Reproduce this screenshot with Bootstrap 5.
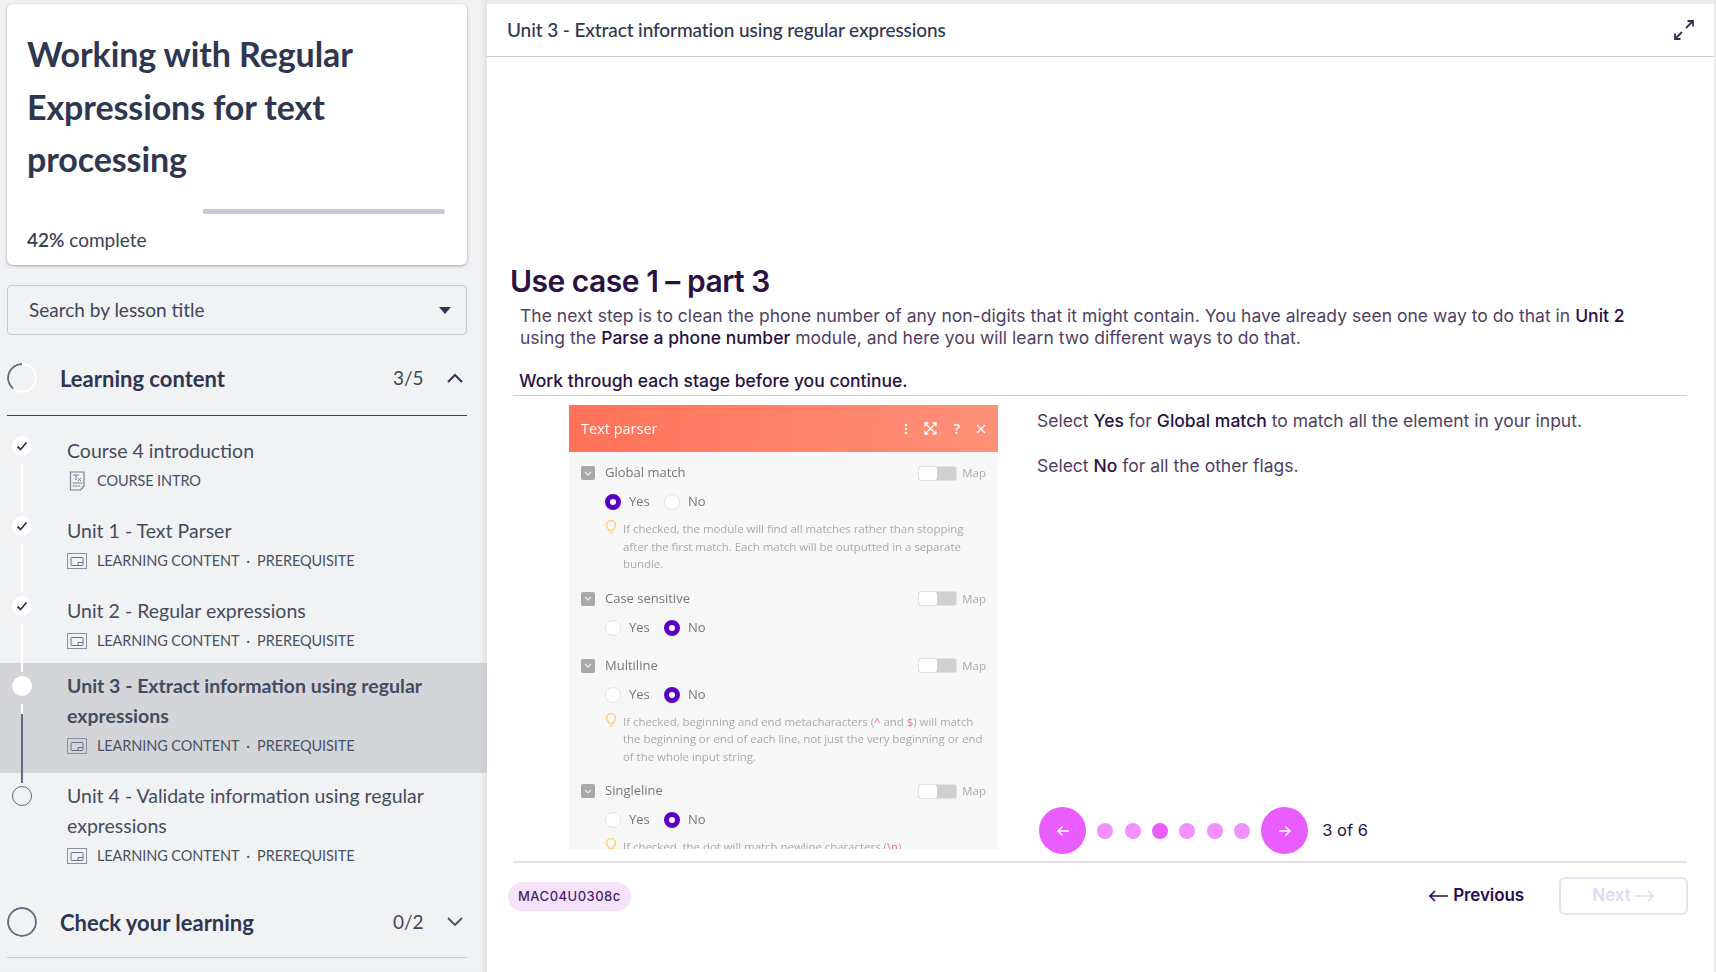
<!DOCTYPE html>
<html lang="en">
<head>
<meta charset="UTF-8" />
<title>Unit 3 - Extract information using regular expressions</title>
<link href="https://cdn.jsdelivr.net/npm/bootstrap@5.3.0/dist/css/bootstrap.min.css" rel="stylesheet" />
<style>
  html, body { height: 100%; margin: 0; overflow: hidden; background: #e9eaec; }
  .page { height: 972px; width: 1716px; }
  .side { width: 487px; flex: none; height: 972px; background: #f1f2f4; padding-top: 4px; font-family: "Lato", sans-serif; color: #3a4256; box-shadow: inset -7px 0 6px -5px #dcdde0; overflow: hidden; }
  .course-box { margin: 0 20px 0 7px; height: 261px; background: #fff; border-radius: 6px; box-shadow: 0 1px 3px rgba(40,45,70,.4); padding: 24px 20px 0 20px; }
  .course-box h1 { font-family: "Lato", sans-serif; font-size: 34px; line-height: 52.5px; font-weight: 700; color: #2f3650; margin: 0; letter-spacing: -.1px; }
  .prog { height: 5px; margin: 23px 0 0 0; display: flex; width: 418px; }
  .prog-done { width: 42%; }
  .prog-left { flex: 1; background: #c8cad6; border-radius: 0 3px 3px 0; }
  .pct { font-size: 19px; margin-top: 12px; }
  .search-box { margin: 20px 20px 0 7px; height: 50px; border: 1px solid #c8cad6; border-radius: 4px; padding: 0 15px 0 21px; font-size: 19px; color: #3f4659; }
  .caret-down { width: 0; height: 0; border-left: 6px solid transparent; border-right: 6px solid transparent; border-top: 7px solid #2f3650; }
  .sec-head { margin: 0 20px 0 7px; height: 80px; font-size: 22px; font-weight: 700; color: #2f3650; }
  .sec-head .num { font-size: 19px; font-weight: 400; color: #3f4659; width: 54px; }
  .sec-one { margin-top: 6px; border-bottom: 1px solid #3a4256; height: 75px; }
  .sec-two { margin-top: 14px; height: 71px; border-bottom: 1px solid #c8cad6; }
  .sec-name { margin-left: 23px; }
  .ring { width: 30px; height: 30px; flex: none; border-radius: 50%; }
  .lesson { position: relative; padding: 0 20px 0 67px; font-size: 19.5px; line-height: 30px; color: #454c60; }
  .lesson-sub { font-size: 14.5px; line-height: 22px; color: #4a5164; display: flex; align-items: center; gap: 10px; margin-top: 4px; letter-spacing: -.1px; }
  .lesson-one { height: 80px; padding-top: 17px; }
  .lesson-first { margin-top: 20px; height: 80px; padding-top: 0; }
  .lesson-now { height: 110px; background: #d4d5d9; padding-top: 8px; font-weight: 700; box-shadow: inset -7px 0 6px -5px #c4c5c9; }
  .lesson-next { height: 100px; padding-top: 8px; }
  .dot-mark { position: absolute; left: 12px; width: 20px; height: 20px; border-radius: 50%; background: #fff; display: flex; align-items: center; justify-content: center; }
  .rail { position: absolute; left: 21px; width: 2px; background: #fff; }

  .content { flex: 1; margin-top: 4px; margin-right: 4px; background: #fff; font-family: "Inter", sans-serif; height: 968px; }
  .top-bar { height: 53px; border-bottom: 1px solid #cdced6; padding: 0 20px 0 20px; font-family: "Lato", sans-serif; font-size: 19px; color: #2f3650; font-weight: 500; }
  .top-bar span { letter-spacing: -.1px; }
  .body-wrap { padding: 0 26px 0 21px; }
  .body-wrap h2 { font-family: "Inter", sans-serif; font-size: 30px; font-weight: 600; color: #2a1145; margin: 204px 0 0 2px; line-height: 40px; letter-spacing: -.5px; }
  .intro { margin: 4px 0 0 12px; font-size: 17.5px; line-height: 22px; color: #503f63; width: 1120px; letter-spacing: .02px; }
  .intro b, .right-note b { font-weight: 500; color: #2a1145; }
  .instruct { margin: 20px 0 0 11px; font-size: 17.5px; line-height: 24px; font-weight: 500; color: #2a1145; }
  .stage { margin: 2px 0 0 5px; border-top: 1px solid #cfcdd2; border-bottom: 2px solid #e3dfe3; height: 468px; width: 1174px; display: flex; }
  .shot { width: 429px; height: 444px; margin: 9px 0 0 56px; flex: none; background: #f7f7f7; font-family: "Open Sans", sans-serif; overflow: hidden; filter: blur(.35px); }
  .shot-bar { height: 47px; background: linear-gradient(100deg, #ff7259, #ff9078); color: #fff; font-size: 14.5px; padding: 0 12px; }
  .shot-bar svg { display: block; }
  .fld { padding: 0 12px 0 12px; color: #777; font-size: 13px; }
  .fld-head { height: 20px; }
  .box-ico { width: 14px; height: 14px; background: #a9a9a9; border-radius: 2px; margin-right: 10px; display: flex; align-items: center; justify-content: center; }
  .map-tog { width: 39px; height: 15px; background: #d0d0d0; border-radius: 3px; border: 1px solid #e2e2e2; margin-right: 5px; }
  .map-tog i { display: block; width: 18px; height: 13px; background: #fff; border-radius: 3px; }
  .map-txt { color: #aaa; font-size: 11.5px; }
  .opts { margin-left: 24px; height: 20px; margin-top: 9px; gap: 8px; }
  .opt { width: 16px; height: 16px; border-radius: 50%; background: #fff; border: 1px solid #e4e4e4; }
  .opt-on { background: #fff; border: 5px solid #5b00c2; }
  .opts span { width: 27px; }
  .hint { display: flex; margin-top: 8px; gap: 6px; margin-left: 24px; font-size: 11.5px; line-height: 17.5px; color: #aaa; letter-spacing: -.05px; }
  .hint svg { flex: none; margin-top: 0; }
  .hint em { font-style: normal; color: #f06aa8; }
  .right-pane { flex: 1; position: relative; margin-left: 39px; padding-top: 13px; }
  .right-note { font-size: 17.5px; line-height: 23px; color: #503f63; }
  .right-note p { margin: 0 0 22px; }
  .stepper { position: absolute; left: 2px; top: 411px; height: 47px; gap: 11px; }
  .step-btn { width: 47px; height: 47px; border-radius: 50%; background: #e95dff; display: flex; align-items: center; justify-content: center; }
  .step-dot { width: 16px; height: 16px; border-radius: 50%; background: #f190ff; margin: 0 .2px; }
  .step-now { background: #e95dff; }
  .step-count { font-size: 16.5px; color: #2a1145; margin-left: 3px; }
  .foot-row { padding: 14px 0 0 0; width: 1180px; }
  .code-pill { background: #f6e3fb; color: #4a1c6e; font-size: 13px; letter-spacing: .5px; border-radius: 15px; height: 29px; line-height: 29px; padding: 0 10px; font-weight: 500; }
  .prev-link { font-size: 17px; font-weight: 600; color: #2a0a55; gap: 5px; letter-spacing: -.1px; }
  .next-btn { width: 129px; height: 38px; border: 2px solid #e6e0f0; border-radius: 6px; color: #e2daee; font-size: 17px; font-weight: 600; gap: 4px; margin-left: 35px; }
</style>
</head>
<body>
<div class="page d-flex">
  <aside class="side">
    <div class="course-box">
      <h1>Working with Regular Expressions for text processing</h1>
      <div class="prog"><div class="prog-done"></div><div class="prog-left"></div></div>
      <div class="pct"><span class="fw-semibold">42%</span> complete</div>
    </div>
    <div class="search-box d-flex align-items-center justify-content-between">
      <span>Search by lesson title</span><span class="caret-down"></span>
    </div>

    <div class="sec-head sec-one d-flex align-items-center">
      <svg class="ring" viewBox="0 0 30 30"><circle cx="15" cy="15" r="14" fill="none" stroke="#fff" stroke-width="2"/><path d="M15 1A14 14 0 0 0 6 25.7" fill="none" stroke="#646a7e" stroke-width="2"/></svg>
      <span class="sec-name flex-grow-1">Learning content</span>
      <span class="num">3/5</span>
      <svg width="16" height="10" viewBox="0 0 16 10" class="me-1"><path d="M1 9l7-7 7 7" fill="none" stroke="#2f3650" stroke-width="2"/></svg>
    </div>

    <div class="lesson lesson-first">
      <span class="dot-mark" style="top:0"><svg width="12" height="10" viewBox="0 0 12 10"><path d="M1.5 5.5l3 3 6-7" fill="none" stroke="#2f3650" stroke-width="1.8"/></svg></span>
      <span class="rail" style="top:27px;height:49px"></span>
      <div>Course 4 introduction</div>
      <div class="lesson-sub">
        <svg width="20" height="20" viewBox="0 0 20 20"><path d="M3.5 1h13.5v14l-3.500 4H3.500z" fill="none" stroke="#7b8092" stroke-width="1.200"/><path d="M6 4h6M9 4v5M11 7l3 3M14 7l-3 3M5.500 12h10M5.500 15h8" fill="none" stroke="#7b8092"/></svg>
        <span>COURSE INTRO</span>
      </div>
    </div>
    <div class="lesson lesson-one">
      <span class="dot-mark" style="top:0"><svg width="12" height="10" viewBox="0 0 12 10"><path d="M1.500 5.500l3 3 6-7" fill="none" stroke="#2f3650" stroke-width="1.800"/></svg></span>
      <span class="rail" style="top:27px;height:49px"></span>
      <div style="margin-top:-17px">Unit 1 - Text Parser</div>
      <div class="lesson-sub">
        <svg width="20" height="16" viewBox="0 0 20 16"><rect x=".5" y=".5" width="19" height="15" fill="none" stroke="#8b8fa0"/><rect x="4" y="4.500" width="12" height="8" rx="1" fill="none" stroke="#6b7084"/><path d="M11 12.500v-3h5" fill="none" stroke="#6b7084"/></svg>
        <span>LEARNING CONTENT &nbsp;·&nbsp; PREREQUISITE</span>
      </div>
    </div>
    <div class="lesson lesson-one" style="height:67px">
      <span class="dot-mark" style="top:0"><svg width="12" height="10" viewBox="0 0 12 10"><path d="M1.500 5.500l3 3 6-7" fill="none" stroke="#2f3650" stroke-width="1.800"/></svg></span>
      <span class="rail" style="top:27px;height:49px;z-index:2"></span>
      <div style="margin-top:-17px">Unit 2 - Regular expressions</div>
      <div class="lesson-sub">
        <svg width="20" height="16" viewBox="0 0 20 16"><rect x=".5" y=".5" width="19" height="15" fill="none" stroke="#8b8fa0"/><rect x="4" y="4.500" width="12" height="8" rx="1" fill="none" stroke="#6b7084"/><path d="M11 12.500v-3h5" fill="none" stroke="#6b7084"/></svg>
        <span>LEARNING CONTENT &nbsp;·&nbsp; PREREQUISITE</span>
      </div>
    </div>
    <div class="lesson lesson-now">
      <span class="dot-mark" style="top:13px"></span>
      <span class="rail" style="top:41px;height:10px;z-index:2"></span>
      <span class="rail" style="top:51px;height:69px;background:#646a7e;z-index:2"></span>
      <div>Unit 3 - Extract information using regular expressions</div>
      <div class="lesson-sub fw-normal">
        <svg width="20" height="16" viewBox="0 0 20 16"><rect x=".5" y=".5" width="19" height="15" fill="none" stroke="#8b8fa0"/><rect x="4" y="4.500" width="12" height="8" rx="1" fill="none" stroke="#6b7084"/><path d="M11 12.500v-3h5" fill="none" stroke="#6b7084"/></svg>
        <span>LEARNING CONTENT &nbsp;·&nbsp; PREREQUISITE</span>
      </div>
    </div>
    <div class="lesson lesson-next">
      <span class="dot-mark" style="top:13px;background:none;border:1px solid #646a7e"></span>
      <div>Unit 4 - Validate information using regular expressions</div>
      <div class="lesson-sub">
        <svg width="20" height="16" viewBox="0 0 20 16"><rect x=".5" y=".5" width="19" height="15" fill="none" stroke="#8b8fa0"/><rect x="4" y="4.500" width="12" height="8" rx="1" fill="none" stroke="#6b7084"/><path d="M11 12.500v-3h5" fill="none" stroke="#6b7084"/></svg>
        <span>LEARNING CONTENT &nbsp;·&nbsp; PREREQUISITE</span>
      </div>
    </div>

    <div class="sec-head sec-two d-flex align-items-center">
      <svg class="ring" viewBox="0 0 30 30"><circle cx="15" cy="15" r="14" fill="none" stroke="#646a7e" stroke-width="2"/></svg>
      <span class="sec-name flex-grow-1">Check your learning</span>
      <span class="num">0/2</span>
      <svg width="16" height="10" viewBox="0 0 16 10" class="me-1"><path d="M1 1l7 7 7-7" fill="none" stroke="#4a5164" stroke-width="1.800"/></svg>
    </div>
  </aside>

  <main class="content">
    <div class="top-bar d-flex align-items-center justify-content-between">
      <span>Unit 3 - Extract information using regular expressions</span>
      <svg width="20" height="20" viewBox="0 0 20 20"><path d="M12 8l7-7M13.500 1H19v5.500M8 12l-7 7M1 13.500V19h5.500" fill="none" stroke="#2f3650" stroke-width="1.800"/></svg>
    </div>
    <div class="body-wrap">
      <h2>Use case 1 – part 3</h2>
      <p class="intro">The next step is to clean the phone number of any non-digits that it might contain. You have already seen one way to do that in <b>Unit 2</b> using the <b>Parse a phone number</b> module, and here you will learn two different ways to do that.</p>
      <div class="instruct">Work through each stage before you continue.</div>
      <div class="stage">
        <div class="shot">
          <div class="shot-bar d-flex align-items-center justify-content-between">
            <span>Text parser</span>
            <span class="d-flex align-items-center gap-3">
              <svg width="4" height="12" viewBox="0 0 4 12"><circle cx="2" cy="2" r="1.300" fill="#fff"/><circle cx="2" cy="6" r="1.300" fill="#fff"/><circle cx="2" cy="10" r="1.300" fill="#fff"/></svg>
              <svg width="13" height="13" viewBox="0 0 13 13"><path d="M1 4.500V1h3.500M8.500 1H12v3.500M1 8.500V12h3.500M8.500 12H12V8.500M1 1l11 11M12 1L1 12" fill="none" stroke="#fff" stroke-width="1.300"/></svg>
              <span class="fw-semibold">?</span>
              <svg width="10" height="10" viewBox="0 0 10 10"><path d="M1 1l8 8M9 1L1 9" stroke="#fff" stroke-width="1.300"/></svg>
            </span>
          </div>
          <div class="fld" style="margin-top:11px">
            <div class="fld-head d-flex align-items-center">
              <span class="box-ico"><svg width="8" height="5" viewBox="0 0 8 5"><path d="M1 1l3 3 3-3" fill="none" stroke="#eee" stroke-width="1.200"/></svg></span>
              <span class="flex-grow-1">Global match</span><span class="map-tog"><i></i></span><span class="map-txt">Map</span>
            </div>
            <div class="opts d-flex align-items-center"><i class="opt opt-on"></i><span>Yes</span><i class="opt"></i><span>No</span></div>
            <div class="hint">
              <svg width="12" height="15" viewBox="0 0 12 15"><path d="M4 10.500C3 8 1.500 7.500 1.500 5a4.500 4.500 0 0 1 9 0c0 2.500-1.500 3-2.500 5.500zM4.500 13h3" fill="none" stroke="#ffd27a" stroke-width="1.400"/></svg>
              <span>If checked, the module will find all matches rather than stopping after the first match. Each match will be outputted in a separate bundle.</span>
            </div>
          </div>
          <div class="fld" style="margin-top:16px">
            <div class="fld-head d-flex align-items-center">
              <span class="box-ico"><svg width="8" height="5" viewBox="0 0 8 5"><path d="M1 1l3 3 3-3" fill="none" stroke="#eee" stroke-width="1.200"/></svg></span>
              <span class="flex-grow-1">Case sensitive</span><span class="map-tog"><i></i></span><span class="map-txt">Map</span>
            </div>
            <div class="opts d-flex align-items-center"><i class="opt"></i><span>Yes</span><i class="opt opt-on"></i><span>No</span></div>
          </div>
          <div class="fld" style="margin-top:18px">
            <div class="fld-head d-flex align-items-center">
              <span class="box-ico"><svg width="8" height="5" viewBox="0 0 8 5"><path d="M1 1l3 3 3-3" fill="none" stroke="#eee" stroke-width="1.200"/></svg></span>
              <span class="flex-grow-1">Multiline</span><span class="map-tog"><i></i></span><span class="map-txt">Map</span>
            </div>
            <div class="opts d-flex align-items-center"><i class="opt"></i><span>Yes</span><i class="opt opt-on"></i><span>No</span></div>
            <div class="hint">
              <svg width="12" height="15" viewBox="0 0 12 15"><path d="M4 10.500C3 8 1.500 7.500 1.500 5a4.500 4.500 0 0 1 9 0c0 2.500-1.500 3-2.500 5.500zM4.500 13h3" fill="none" stroke="#ffd27a" stroke-width="1.400"/></svg>
              <span>If checked, beginning and end metacharacters (<em>^</em> and <em>$</em>) will match the beginning or end of each line, not just the very beginning or end of the whole input string.</span>
            </div>
          </div>
          <div class="fld" style="margin-top:16px">
            <div class="fld-head d-flex align-items-center">
              <span class="box-ico"><svg width="8" height="5" viewBox="0 0 8 5"><path d="M1 1l3 3 3-3" fill="none" stroke="#eee" stroke-width="1.200"/></svg></span>
              <span class="flex-grow-1">Singleline</span><span class="map-tog"><i></i></span><span class="map-txt">Map</span>
            </div>
            <div class="opts d-flex align-items-center"><i class="opt"></i><span>Yes</span><i class="opt opt-on"></i><span>No</span></div>
            <div class="hint">
              <svg width="12" height="15" viewBox="0 0 12 15"><path d="M4 10.500C3 8 1.500 7.500 1.500 5a4.500 4.500 0 0 1 9 0c0 2.500-1.500 3-2.500 5.500zM4.500 13h3" fill="none" stroke="#ffd27a" stroke-width="1.400"/></svg>
              <span>If checked, the dot will match newline characters (<em>\n</em>).</span>
            </div>
          </div>
        </div>
        <div class="right-pane">
          <div class="right-note">
            <p>Select <b>Yes</b> for <b>Global match</b> to match all the element in your input.</p>
            <p>Select <b>No</b> for all the other flags.</p>
          </div>
          <div class="stepper d-flex align-items-center">
            <span class="step-btn"><svg width="14" height="12" viewBox="0 0 14 12"><path d="M13 6H2M6.500 1.500L2 6l4.500 4.500" fill="none" stroke="#fff" stroke-width="1.500"/></svg></span>
            <i class="step-dot"></i><i class="step-dot"></i><i class="step-dot step-now"></i><i class="step-dot"></i><i class="step-dot"></i><i class="step-dot"></i>
            <span class="step-btn"><svg width="14" height="12" viewBox="0 0 14 12"><path d="M1 6h11M7.500 1.500L12 6l-4.500 4.500" fill="none" stroke="#fff" stroke-width="1.500"/></svg></span>
            <span class="step-count">3 of 6</span>
          </div>
        </div>
      </div>
      <div class="foot-row d-flex align-items-center justify-content-between">
        <span class="code-pill">MAC04U0308c</span>
        <div class="d-flex align-items-center">
          <span class="prev-link d-flex align-items-center"><svg width="20" height="12" viewBox="0 0 20 12"><path d="M20 6H2M7 1L2 6l5 5" fill="none" stroke="#2a0a55" stroke-width="1.600"/></svg>Previous</span>
          <span class="next-btn d-flex align-items-center justify-content-center">Next <svg width="20" height="12" viewBox="0 0 20 12"><path d="M0 6h18M13 1l5 5-5 5" fill="none" stroke="#e2daee" stroke-width="1.600"/></svg></span>
        </div>
      </div>
    </div>
  </main>
</div>
<script src="https://cdn.jsdelivr.net/npm/bootstrap@5.3.0/dist/js/bootstrap.bundle.min.js"></script>
</body>
</html>
